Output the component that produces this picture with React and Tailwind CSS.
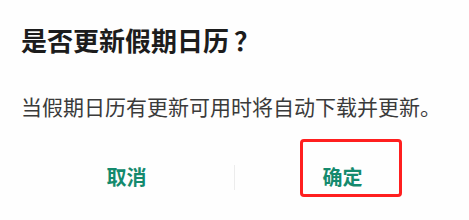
import React from "react";

const font = { fontFamily: '"Noto Sans CJK SC", "Noto Sans", sans-serif' };

const App = () => {
	return (
		<div
			className="w-[469px] h-[220px] bg-[#fefefe] overflow-hidden"
			style={font}
			lang="zh-CN"
		>
			<div className="pl-[21px] pt-[26px]">
				<h2 className="text-[26px] leading-[28px] font-bold text-[#1c1c1c]">
					是否更新假期日历<span className="ml-[5px]">？</span>
				</h2>
			</div>
			<p className="pl-[21px] mt-[40px] text-[21px] leading-[24px] text-[#3a3a3a] whitespace-nowrap">
				当假期日历有更新可用时将自动下载并更新。
			</p>
			<div className="mt-[44px] px-[19px] flex items-center">
				<button className="flex-1 h-[30px] text-[20px] leading-[30px] font-bold text-[#148a6d]">
					取消
				</button>
				<div className="w-px h-[25px] bg-[#ececec]" />
				<div className="flex-1 relative flex justify-center">
					<button className="h-[30px] text-[20px] leading-[30px] font-bold text-[#148a6d]">
						确定
					</button>
					<div className="absolute left-[65px] top-[-23px] w-[102px] h-[58px] border-[3px] border-[#ff1f1f] rounded-[4px]" />
				</div>
			</div>
		</div>
	);
};

export default App;
